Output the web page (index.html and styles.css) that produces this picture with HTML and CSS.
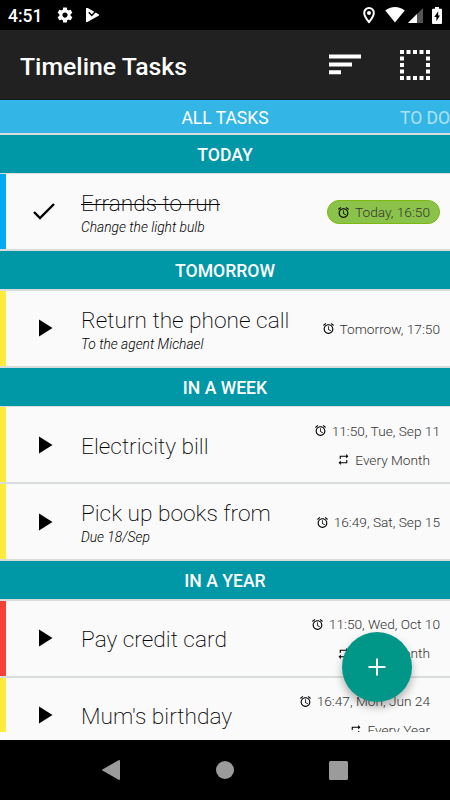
FILE: index.html
```html
<!DOCTYPE html>
<html lang="en">
<head>
    <meta charset="UTF-8">
    <meta name="viewport" content="width=device-width, initial-scale=1.0">
    <title>Timeline Tasks</title>
    <link rel="stylesheet" href="styles.css">
</head>
<body>

    <!-- shared icons -->
    <svg class="defs" width="0" height="0">
        <symbol id="alarm" viewBox="0 0 24 24">
            <path d="M22 5.72l-4.6-3.86-1.29 1.53 4.6 3.86L22 5.72zM7.88 3.39L6.6 1.86 2 5.71l1.29 1.53 4.59-3.85zM12.5 8H11v6l4.75 2.85.75-1.23-4-2.37V8zM12 4c-4.97 0-9 4.03-9 9s4.02 9 9 9c4.97 0 9-4.03 9-9s-4.03-9-9-9zm0 16c-3.87 0-7-3.13-7-7s3.13-7 7-7 7 3.13 7 7-3.13 7-7 7z"/>
        </symbol>
        <symbol id="repeat" viewBox="0 0 24 24">
            <path d="M7 7h10v3l4-4-4-4v3H5v6h2V7zm10 10H7v-3l-4 4 4 4v-3h12v-6h-2v4z"/>
        </symbol>
        <symbol id="play" viewBox="0 0 14 18">
            <path d="M0 0.5v17L13.5 9z"/>
        </symbol>
    </svg>

    <div class="status-bar">
        <span class="clock">4:51</span>
        <svg class="gear" width="18" height="18" viewBox="0 0 24 24"><path d="M19.43 12.98c.04-.32.07-.64.07-.98s-.03-.66-.07-.98l2.11-1.65c.19-.15.24-.42.12-.64l-2-3.46c-.12-.22-.39-.3-.61-.22l-2.49 1c-.52-.4-1.08-.73-1.69-.98l-.38-2.65C14.46 2.18 14.25 2 14 2h-4c-.25 0-.46.18-.49.42l-.38 2.65c-.61.25-1.17.59-1.69.98l-2.49-1c-.23-.09-.49 0-.61.22l-2 3.46c-.13.22-.07.49.12.64l2.11 1.65c-.04.32-.07.65-.07.98s.03.66.07.98l-2.11 1.65c-.19.15-.24.42-.12.64l2 3.46c.12.22.39.3.61.22l2.49-1c.52.4 1.08.73 1.69.98l.38 2.65c.03.24.24.42.49.42h4c.25 0 .46-.18.49-.42l.38-2.65c.61-.25 1.17-.59 1.69-.98l2.49 1c.23.09.49 0 .61-.22l2-3.46c.12-.22.07-.49-.12-.64l-2.11-1.65zM12 15.5c-1.93 0-3.5-1.57-3.5-3.5s1.57-3.5 3.5-3.5 3.5 1.57 3.5 3.5-1.57 3.5-3.5 3.5z"/></svg>
        <svg class="store" width="15" height="16" viewBox="0 0 15 16">
            <path d="M1.2 1h1.6L14 7.4v1.2L2.3 15H1V1.2z"/>
            <path class="store-check" d="M3.8 5.2l3 3.2 5-5.4"/>
        </svg>
        <div class="status-right">
            <svg class="pin" width="12" height="17" viewBox="0 0 12 17">
                <path class="pin-outline" d="M6 1.1C3.2 1.1 1.2 3.2 1.2 5.9 1.2 9.2 6 15 6 15s4.8-5.8 4.8-9.1C10.8 3.2 8.8 1.1 6 1.1z"/>
                <circle cx="6" cy="6" r="2"/>
            </svg>
            <svg class="wifi" width="20" height="16" viewBox="0 0 20 16"><path d="M.3 3.5C3 1.2 6.3 0 10 0s7 1.2 9.7 3.5L10 15.5z"/></svg>
            <svg class="signal" width="15" height="15" viewBox="0 0 15 15">
                <path class="signal-off" d="M15 0v15H0z"/>
                <path d="M9 6v9H0z"/>
            </svg>
            <svg class="battery" width="10" height="17" viewBox="0 0 10 17">
                <path d="M3 0h4v1.7h2q1 0 1 1V16q0 1-1 1H1q-1 0-1-1V2.7q0-1 1-1h2z"/>
                <path class="bolt" d="M6.2 4.3L2.2 10h2.2v4.3L8 8.5H6.2z"/>
            </svg>
        </div>
    </div>

    <div class="app-bar">
        <h1>Timeline Tasks</h1>
        <svg class="sort" width="32" height="21" viewBox="0 0 32 21"><path d="M0 .5h32v4H0zM0 8.5h23v4H0zM0 16.3h12v4H0z"/></svg>
        <svg class="select" width="30" height="30" viewBox="0 0 30 30">
            <path d="M0 2h30M0 28h30"/>
            <path d="M2 0v30M28 0v30"/>
        </svg>
    </div>

    <div class="tabs">
        <span class="tab active">ALL TASKS</span>
        <span class="tab next">TO DO</span>
    </div>

    <div class="timeline">
        <h2>TODAY</h2>
        <div class="task blue">
            <svg class="check" width="22" height="17" viewBox="0 0 22 17"><path d="M1 9l6 6L21 1"/></svg>
            <div class="info">
                <div class="title done">Errands to run</div>
                <div class="note">Change the light bulb</div>
            </div>
            <div class="times">
                <div class="time badge"><svg class="icon"><use href="#alarm"/></svg>Today, 16:50</div>
            </div>
        </div>

        <h2>TOMORROW</h2>
        <div class="task yellow">
            <svg class="play"><use href="#play"/></svg>
            <div class="info">
                <div class="title">Return the phone call</div>
                <div class="note">To the agent Michael</div>
            </div>
            <div class="times">
                <div class="time"><svg class="icon"><use href="#alarm"/></svg>Tomorrow, 17:50</div>
            </div>
        </div>

        <h2>IN A WEEK</h2>
        <div class="task yellow">
            <svg class="play"><use href="#play"/></svg>
            <div class="info">
                <div class="title">Electricity bill</div>
            </div>
            <div class="times">
                <div class="time"><svg class="icon"><use href="#alarm"/></svg>11:50, Tue, Sep 11</div>
                <div class="time inset"><svg class="icon"><use href="#repeat"/></svg>Every Month</div>
            </div>
        </div>
        <div class="task yellow">
            <svg class="play"><use href="#play"/></svg>
            <div class="info">
                <div class="title">Pick up books from</div>
                <div class="note">Due 18/Sep</div>
            </div>
            <div class="times">
                <div class="time"><svg class="icon"><use href="#alarm"/></svg>16:49, Sat, Sep 15</div>
            </div>
        </div>

        <h2>IN A YEAR</h2>
        <div class="task red">
            <svg class="play"><use href="#play"/></svg>
            <div class="info">
                <div class="title">Pay credit card</div>
            </div>
            <div class="times">
                <div class="time"><svg class="icon"><use href="#alarm"/></svg>11:50, Wed, Oct 10</div>
                <div class="time inset"><svg class="icon"><use href="#repeat"/></svg>Every Month</div>
            </div>
        </div>
        <div class="task yellow">
            <svg class="play"><use href="#play"/></svg>
            <div class="info">
                <div class="title">Mum's birthday</div>
            </div>
            <div class="times">
                <div class="time inset"><svg class="icon"><use href="#alarm"/></svg>16:47, Mon, Jun 24</div>
                <div class="time inset"><svg class="icon"><use href="#repeat"/></svg>Every Year</div>
            </div>
        </div>
    </div>

    <div class="fab">
        <svg width="18" height="18" viewBox="0 0 18 18"><path d="M9 .5v17M.5 9h17"/></svg>
    </div>

    <div class="nav-bar">
        <svg width="18" height="20" viewBox="0 0 18 20"><path d="M17 0q1 0 1 1v18q0 1-1 1L.4 10.6q-.8-.6 0-1.2z"/></svg>
        <svg width="18" height="18" viewBox="0 0 18 18"><circle cx="9" cy="9" r="9"/></svg>
        <svg width="19" height="19" viewBox="0 0 19 19"><rect width="19" height="19" rx="1.5"/></svg>
    </div>

</body>
</html>
```

FILE: styles.css
```css
* {
    box-sizing: border-box;
}
body {
    margin: 0;
    width: 450px;
    height: 800px;
    position: relative;
    overflow: hidden;
    display: flex;
    flex-direction: column;
    background-color: #fafafa;
    font-family: Roboto, "Liberation Sans", sans-serif;
}
svg {
    flex: none;
    display: block;
}
.defs {
    position: absolute;
}

/* status bar */
.status-bar {
    flex: none;
    display: flex;
    align-items: center;
    height: 30px;
    padding: 0 8px 0 8px;
    background-color: #000;
    color: #fff;
    fill: #fff;
}
.clock {
    width: 48px;
    font-size: 17.5px;
    font-weight: 500;
    line-height: 30px;
    padding-top: 1px;
}
.gear {
    margin-right: 11px;
}
.store-check {
    fill: none;
    stroke: #000;
    stroke-width: 1.5;
}
.status-right {
    display: flex;
    align-items: center;
    margin-left: auto;
}
.pin {
    margin-right: 10px;
}
.pin-outline {
    fill: none;
    stroke: #fff;
    stroke-width: 2;
}
.wifi {
    margin-right: 3px;
}
.signal {
    margin-right: 9px;
}
.signal-off {
    fill: #555;
}
.bolt {
    fill: #000;
}

/* app bar */
.app-bar {
    flex: none;
    display: flex;
    align-items: center;
    height: 70px;
    padding: 0 20px;
    background-color: #212121;
    border-bottom: 1px solid #0c1a20;
    fill: #fff;
}
h1 {
    margin: 3px auto 0 0;
    font-size: 24.8px;
    font-weight: 500;
    color: #fff;
}
.sort {
    margin-right: 39px;
}
.select {
    fill: none;
    stroke: #fff;
    stroke-width: 4;
    stroke-dasharray: 4 2.5;
}

/* tabs */
.tabs {
    flex: none;
    position: relative;
    height: 33px;
    padding-top: 1px;
    background-color: #33b5e5;
    color: #fff;
    font-size: 17.5px;
    line-height: 35px;
    text-align: center;
    white-space: nowrap;
}
.next {
    position: absolute;
    left: 400px;
    opacity: 0.6;
}

/* list */
.timeline {
    flex: none;
    height: 599px;
    padding-top: 1.6px;
    overflow: hidden;
    background-color: #d9dcdc;
}
h2 {
    height: 38px;
    margin: 0 0 1.5px;
    background-color: #0097a7;
    color: #fff;
    font-size: 17.6px;
    font-weight: 500;
    line-height: 40px;
    text-align: center;
}
.task {
    display: flex;
    align-items: center;
    height: 75px;
    margin-bottom: 2px;
    padding-right: 10px;
    border-left: 6px solid #ffeb3b;
    background-color: #fafafa;
    color: #000;
}
.blue {
    border-color: #03a9f4;
}
.red {
    border-color: #f44336;
}
.play {
    width: 14px;
    height: 18px;
    margin: 0 28px 0 33px;
}
.check {
    margin: 0 26px 0 27px;
    fill: none;
    stroke: #000;
    stroke-width: 2.4;
}
.info {
    padding-top: 4px;
}
.title {
    font-size: 22.7px;
    font-weight: 200;
    line-height: 28px;
    white-space: nowrap;
}
.done {
    text-decoration: line-through 1px;
}
.note {
    font-size: 13.8px;
    font-style: italic;
    font-weight: 300;
    line-height: 19px;
}
.times {
    display: flex;
    flex-direction: column;
    align-items: flex-end;
    gap: 5px;
    margin-left: auto;
    padding-top: 1px;
}
.time {
    display: flex;
    align-items: center;
    height: 24px;
    color: #333;
    font-size: 13.7px;
    font-weight: 300;
    white-space: nowrap;
}
.inset {
    padding-right: 10px;
}
.icon {
    width: 13px;
    height: 13px;
    margin-right: 5px;
}
.badge {
    padding: 0 9px;
    border: 1px solid #7cb80f;
    border-radius: 12px;
    background-color: #8bc34a;
}

/* add button */
.fab {
    position: absolute;
    left: 342px;
    top: 632px;
    width: 70px;
    height: 70px;
    display: flex;
    align-items: center;
    justify-content: center;
    border-radius: 50%;
    background-color: #009688;
    box-shadow: 0 5px 9px rgba(0, 0, 0, 0.3);
}
.fab path {
    stroke: #fff;
    stroke-width: 2;
}

/* navigation bar */
.nav-bar {
    flex: none;
    display: flex;
    align-items: center;
    gap: 95.5px;
    height: 60px;
    margin-top: 8px;
    padding-left: 102px;
    background-color: #000;
    fill: #9b9b9b;
}
```
